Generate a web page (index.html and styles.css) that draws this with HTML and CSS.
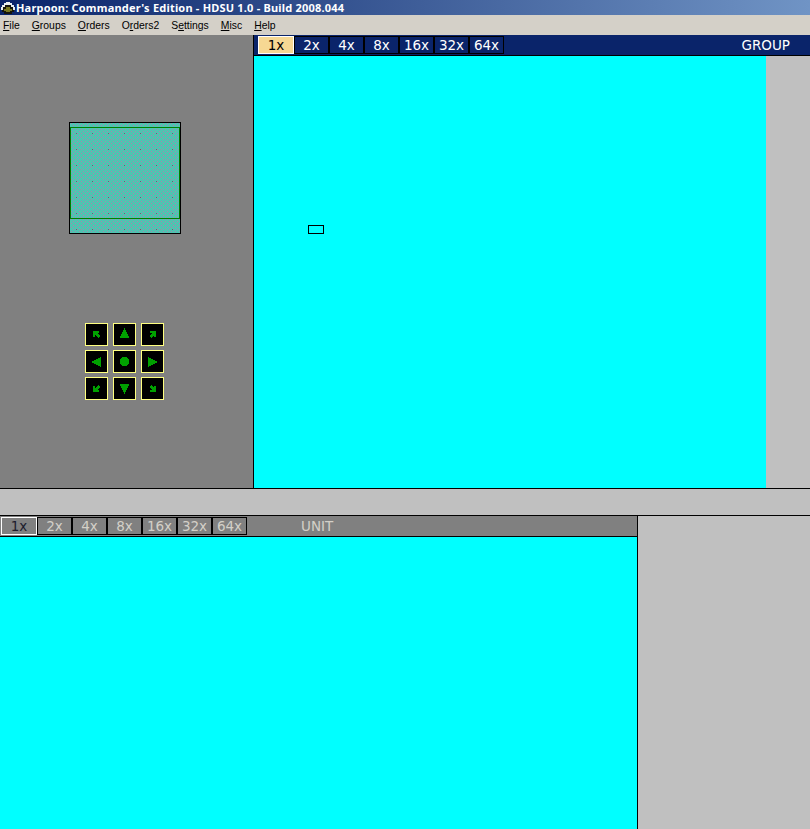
FILE: index.html
```html
<!DOCTYPE html>
<html lang="en">
<head>
<meta charset="utf-8">
<title>Harpoon: Commander's Edition</title>
<link rel="stylesheet" href="styles.css">
</head>
<body>
<div class="app">
  <header class="titlebar">
    <svg class="app-icon" viewBox="0 0 14 14" width="14" height="14" shape-rendering="crispEdges"><path d="M0 0H14V14H0Z" fill="#0a246a"/><path d="M0 6H1V4H3V2H5V1H9V2H11V4H13V6H14V9H0Z" fill="#e8eef2"/><path d="M2 6H4V4H10V6H12V9H13V11H11V13H3V11H1V9H2Z" fill="#14140c"/><path d="M5 6H9V8H11V10H9V11H5V10H3V8H5Z" fill="#77771f"/></svg>
    <span class="title-text">Harpoon: Commander's Edition - HDSU 1.0 - Build 2008.044</span>
  </header>
  <nav class="menubar">
    <span class="menu-item"><u>F</u>ile</span>
    <span class="menu-item"><u>G</u>roups</span>
    <span class="menu-item"><u>O</u>rders</span>
    <span class="menu-item">O<u>r</u>ders2</span>
    <span class="menu-item">S<u>e</u>ttings</span>
    <span class="menu-item"><u>M</u>isc</span>
    <span class="menu-item"><u>H</u>elp</span>
  </nav>
  <section class="top">
    <aside class="left">
      <div class="minimap">
        <svg class="minimap-art" viewBox="0 0 110 110" width="110" height="110" shape-rendering="crispEdges">
          <defs>
            <pattern id="dither" width="4" height="4" patternUnits="userSpaceOnUse">
              <rect width="4" height="4" fill="#4fc3b1"/>
              <rect x="1" y="0" width="1" height="1" fill="#a884ac"/>
              <rect x="3" y="2" width="1" height="1" fill="#a884ac"/>
            </pattern>
            <pattern id="specks" width="16" height="16" patternUnits="userSpaceOnUse">
              <rect x="6" y="10" width="1" height="1" fill="#4a7a74"/>
            </pattern>
          </defs>
          <rect width="110" height="110" fill="url(#dither)"/>
          <rect width="110" height="110" fill="url(#specks)"/>
          <rect x="0.5" y="4.5" width="109" height="91" fill="none" stroke="#008000"/>
        </svg>
      </div>
      <div class="nav-grid">
        <button class="nav-btn"><svg viewBox="0 0 21 21"><polygon points="7,7 13,7 13,9 11,9 14,12 12,14 9,11 9,13 7,13"/></svg></button>
        <button class="nav-btn"><svg viewBox="0 0 21 21"><polygon points="10.5,4 15.5,14 5.5,14"/></svg></button>
        <button class="nav-btn"><svg viewBox="0 0 21 21"><polygon points="14,7 8,7 8,9 10,9 7,12 9,14 12,11 12,13 14,13"/></svg></button>
        <button class="nav-btn"><svg viewBox="0 0 21 21"><polygon points="5,11 15,6 15,16"/></svg></button>
        <button class="nav-btn"><svg viewBox="0 0 21 21"><circle cx="10.5" cy="10.5" r="4.6"/></svg></button>
        <button class="nav-btn"><svg viewBox="0 0 21 21"><polygon points="6,6 16,11 6,16"/></svg></button>
        <button class="nav-btn"><svg viewBox="0 0 21 21"><polygon points="7,14 13,14 13,12 11,12 14,9 12,7 9,10 9,8 7,8"/></svg></button>
        <button class="nav-btn"><svg viewBox="0 0 21 21"><polygon points="5.5,6 15.5,6 10.5,16"/></svg></button>
        <button class="nav-btn"><svg viewBox="0 0 21 21"><polygon points="14,14 8,14 8,12 10,12 7,9 9,7 12,10 12,8 14,8"/></svg></button>
      </div>
    </aside>
    <div class="view">
      <div class="zoombar zoombar-blue">
        <span class="zoom zoom-on">1x</span><span class="zoom">2x</span><span class="zoom">4x</span><span class="zoom">8x</span><span class="zoom">16x</span><span class="zoom">32x</span><span class="zoom">64x</span>
        <span class="bar-label group-label">GROUP</span>
      </div>
      <div class="view-body">
        <div class="cyan group-canvas"><div class="marker"></div></div>
        <div class="side-group"></div>
      </div>
    </div>
  </section>
  <div class="divider"></div>
  <section class="bottom">
    <div class="unit">
      <div class="zoombar zoombar-gray">
        <span class="zoom zoom-on">1x</span><span class="zoom">2x</span><span class="zoom">4x</span><span class="zoom">8x</span><span class="zoom">16x</span><span class="zoom">32x</span><span class="zoom">64x</span>
        <span class="bar-label unit-label">UNIT</span>
      </div>
      <div class="cyan unit-canvas"></div>
    </div>
    <div class="side-unit"></div>
  </section>
</div>
</body>
</html>
```

FILE: styles.css
```css
* { box-sizing: border-box; }
html, body { margin: 0; height: 100%; overflow: hidden; }
body { font-family: "Liberation Sans", Arial, sans-serif; background: #c0c0c0; }
.app { width: 810px; height: 829px; display: flex; flex-direction: column; }

.titlebar { height: 15px; flex: none; display: flex; align-items: center; background: linear-gradient(90deg, #0a246a, #7094c5); color: #fff; }
.app-icon { margin: 0 1px 0 1px; flex: none; }
.title-text { font: bold 11px "Noto Sans", sans-serif; letter-spacing: 0.2px; white-space: nowrap; }

.menubar { height: 20px; flex: none; display: flex; align-items: center; background: #d4d0c8; font: 10.4px "Liberation Sans", sans-serif; color: #000; padding-left: 3px; gap: 12px; }
.menu-item { white-space: nowrap; }

.top { height: 454px; flex: none; display: flex; border-bottom: 1px solid #000; }
.left { width: 254px; flex: none; background: #808080; border-right: 1px solid #000; padding: 87px 0 0 69px; }
.minimap { width: 112px; height: 112px; border: 1px solid #000; }
.minimap-art { display: block; }
.nav-grid { display: grid; grid-template-columns: repeat(3, 23px); grid-auto-rows: 23px; column-gap: 5px; row-gap: 4px; margin: 89px 0 0 16px; }
.nav-btn { padding: 0; border: 1px solid #ffff80; background: #000; display: block; }
.nav-btn svg { display: block; width: 21px; height: 21px; fill: #00a000; shape-rendering: crispEdges; }

.view { flex: 1; display: flex; flex-direction: column; min-width: 0; }
.zoombar { display: flex; align-items: center; flex: none; height: 21px; border-bottom: 1px solid #000; font: 13.5px "DejaVu Sans", sans-serif; }
.zoombar-blue { background: #0a246a; padding: 0 0 1px 4px; color: #fff; }
.zoombar-gray { background: #808080; padding: 0 0 1px 1px; color: #d4d0c8; }
.zoom { width: 35px; height: 18px; line-height: 16px; text-align: center; border: 1px solid #000; white-space: nowrap; }
.zoombar-blue .zoom-on { width: 36px; background: #f6d893; color: #000; border-color: #fff; }
.zoombar-gray .zoom-on { width: 36px; color: #1c1c2c; border-color: #fff; }
.group-label { margin-left: auto; margin-right: 20px; }
.unit-label { margin-left: 54px; }

.view-body { flex: 1; display: flex; min-height: 0; }
.cyan { background: #00ffff; }
.group-canvas { width: 512px; flex: none; padding: 169px 0 0 54px; }
.marker { width: 16px; height: 9px; border: 1px solid #000; }
.side-group { flex: 1; background: #c0c0c0; }

.divider { height: 27px; flex: none; background: #c0c0c0; border-bottom: 1px solid #000; }

.bottom { flex: 1; display: flex; min-height: 0; }
.unit { width: 638px; flex: none; display: flex; flex-direction: column; border-right: 1px solid #000; }
.unit-canvas { flex: 1; }
.side-unit { flex: 1; background: #c0c0c0; }
```
